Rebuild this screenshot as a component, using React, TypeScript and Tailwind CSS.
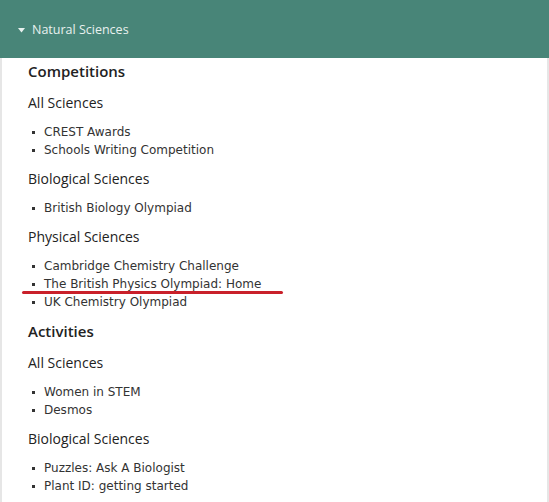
import React from 'react';

type Group = { title: string; items: string[] };
type Section = { title: string; groups: Group[] };

const sections: Section[] = [
  {
    title: 'Competitions',
    groups: [
      { title: 'All Sciences', items: ['CREST Awards', 'Schools Writing Competition'] },
      { title: 'Biological Sciences', items: ['British Biology Olympiad'] },
      {
        title: 'Physical Sciences',
        items: ['Cambridge Chemistry Challenge', 'The British Physics Olympiad: Home', 'UK Chemistry Olympiad'],
      },
    ],
  },
  {
    title: 'Activities',
    groups: [
      { title: 'All Sciences', items: ['Women in STEM', 'Desmos'] },
      { title: 'Biological Sciences', items: ['Puzzles: Ask A Biologist', 'Plant ID: getting started'] },
    ],
  },
];

const heading = { fontFamily: '"Open Sans", "Noto Sans", sans-serif' };
const body = { fontFamily: '"DejaVu Sans", Verdana, sans-serif' };

export default function App() {
  return (
    <div className="w-[549px] h-[502px] overflow-hidden bg-white">
      {/* Accordion header */}
      <div className="h-[58px] bg-[#488578] flex items-center pl-[18px] pt-[3px]">
        <svg width="7" height="5" viewBox="0 0 7 5" className="mr-[7px]">
          <polygon points="0,0 7,0 3.5,4.5" fill="#e8f1ef" />
        </svg>
        <span className="text-[12.5px] text-[#e8f1ef]" style={heading}>
          Natural Sciences
        </span>
      </div>

      {/* Panel */}
      <div className="border-x-2 border-[#e6e6e6] h-full pl-[26px] pt-[2px]">
        {sections.map((s, si) => (
          <div key={s.title} className={si > 0 ? 'mt-[9px]' : ''}>
            <h3 className="text-[15px] font-semibold text-[#222] leading-[23px]" style={heading}>
              {s.title}
            </h3>
            {s.groups.map((g) => (
              <div key={g.title + s.title} className="mt-[10px]">
                <h4 className="text-[14px] font-[500] text-[#222] leading-[20px]" style={heading}>
                  {g.title}
                </h4>
                <ul className="mt-[10px]">
                  {g.items.map((it) => (
                    <li key={it} className="relative flex items-center h-[18px] text-[12px] text-[#333]" style={body}>
                      <span className="w-[3px] h-[3px] bg-[#333] ml-[4px] mr-[9px]" />
                      {it}
                      {it === 'The British Physics Olympiad: Home' && (
                        <span className="absolute left-[-6px] top-[16px] w-[261px] h-[3px] rounded-full bg-[#c9202a]" />
                      )}
                    </li>
                  ))}
                </ul>
              </div>
            ))}
          </div>
        ))}
      </div>
    </div>
  );
}
